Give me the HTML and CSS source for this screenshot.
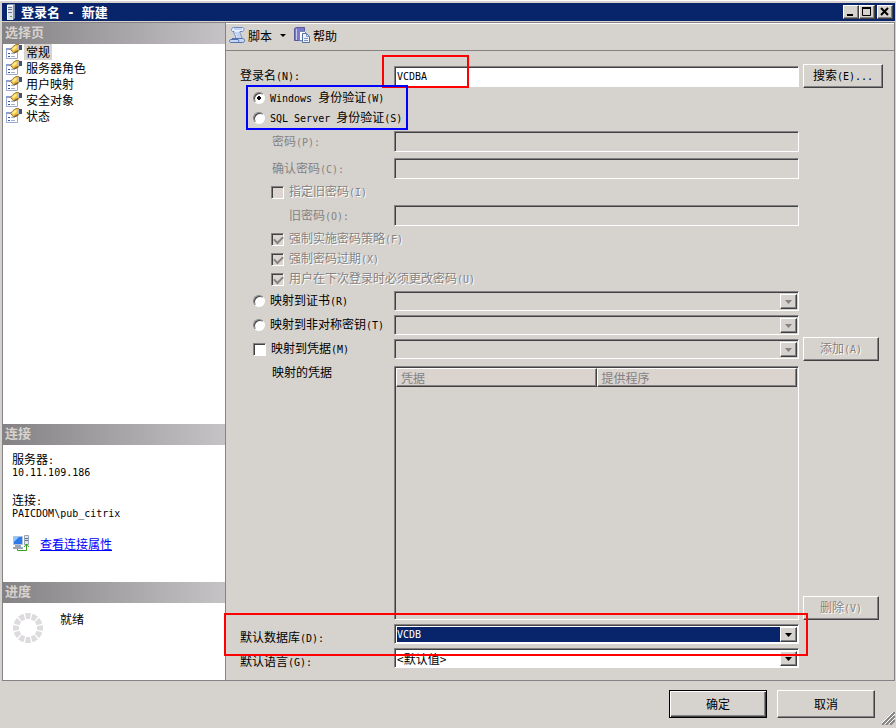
FILE: index.html
```
<!DOCTYPE html>
<html lang="zh-CN">
<head>
    <meta charset="UTF-8">
    <meta name="viewport" content="width=device-width, initial-scale=1.0">
    <title>登录名 - 新建</title>
    <link rel="stylesheet" href="styles.css">
</head>
<body>

<svg class="defs" width="0" height="0">
    <symbol id="page-icon" viewBox="0 0 16 16">
        <path d="M0.500 4.500h11v10h-11z" fill="#fff" stroke="#9caad0"/>
        <path d="M0 4h6v2H0z" fill="#8c9ed6"/>
        <path d="M2 9h2v1H2zM2 12h2v1H2z" fill="#3159c6"/>
        <path d="M5 9h4v1H5zM5 12h4v1H5z" fill="#a5aed0"/>
        <path d="M4.500 5.500L7 2.500l3-2h3v6l-3 2H7L6 7z" fill="#efc34a" stroke="#a57c29"/>
        <path d="M6 5l3-3 2 1-3 3z" fill="#ffeb94"/>
        <path d="M8 8l4-2v1l-3 2z" fill="#6b5529"/>
        <path d="M13 1h3v5h-3z" fill="#4a5563"/>
        <path d="M12 1h1v5h-1z" fill="#b5bac6"/>
    </symbol>
</svg>

<div class="window">
    <header class="title-bar">
        <svg width="10" height="16" viewBox="0 0 10 16">
            <path d="M1 1l1-1h7v14l-2 2H1z" fill="#8494b5"/>
            <path d="M1 1h6v15H1z" fill="#dee3ea"/>
            <path d="M2 3h4v1H2zM2 5h4v1H2zM2 8h4v1H2z" fill="#6b7d9c"/>
            <path d="M1 1h1v14H1zM2 1h5v1H2z" fill="#fff"/>
            <path d="M4 12h2v1H4z" fill="#39b54a"/>
        </svg>
        <h1>登录名<span class="dash"> - </span>新建</h1>
        <button class="win-button" aria-label="最小化"><svg width="12" height="10"><path d="M2 8h6" stroke="#000" stroke-width="2"/></svg></button>
        <button class="win-button" aria-label="最大化"><svg width="12" height="10"><path d="M1.500 1v7.500h8V1" fill="none" stroke="#000"/><path d="M1 1h9" stroke="#000" stroke-width="2"/></svg></button>
        <button class="win-button close" aria-label="关闭"><svg width="12" height="10"><path d="M2 1l7 7M9 1L2 8" stroke="#000" stroke-width="2"/></svg></button>
    </header>

    <div class="frame">
        <aside class="sidebar">
            <h2>选择页</h2>
            <ul class="pages">
                <li><svg width="16" height="16"><use href="#page-icon"/></svg><a href="#" class="current">常规</a></li>
                <li><svg width="16" height="16"><use href="#page-icon"/></svg><a href="#">服务器角色</a></li>
                <li><svg width="16" height="16"><use href="#page-icon"/></svg><a href="#">用户映射</a></li>
                <li><svg width="16" height="16"><use href="#page-icon"/></svg><a href="#">安全对象</a></li>
                <li><svg width="16" height="16"><use href="#page-icon"/></svg><a href="#">状态</a></li>
            </ul>

            <h2>连接</h2>
            <div class="connection">
                <dl>
                    <dt>服务器<span class="en">:</span></dt>
                    <dd class="en">10.11.109.186</dd>
                    <dt>连接<span class="en">:</span></dt>
                    <dd class="en">PAICDOM\pub_citrix</dd>
                </dl>
                <div class="properties">
                    <svg width="18" height="17" viewBox="0 0 18 17">
                        <path d="M1.500 1.500h9v8h-9z" fill="#2c7be8" stroke="#b3c3dc"/>
                        <path d="M2 2h5L2 7z" fill="#8cc4ff"/>
                        <path d="M3 11h6M1 13h10" stroke="#9aa6b8" stroke-width="2"/>
                        <path d="M12.500 0.500h4v9h-4z" fill="#e4e7ec" stroke="#98a2b0"/>
                        <path d="M13 3h3v1h-3zM13 5h3v1h-3z" fill="#5c6f8e"/>
                        <path d="M5.500 14v1.500h9V9M12 12l2.500-3 2.500 3" fill="none" stroke="#37a01e"/>
                    </svg>
                    <a href="#">查看连接属性</a>
                </div>
            </div>

            <h2>进度</h2>
            <div class="progress">
                <svg width="30" height="30" viewBox="0 0 30 30">
                    <circle cx="15" cy="15" r="12" fill="none" stroke="#dedbde" stroke-width="6" pathLength="120" stroke-dasharray="8 2" stroke-dashoffset="4"/>
                </svg>
                <span>就绪</span>
            </div>
        </aside>

        <main class="content">
            <div class="toolbar">
                <button>
                    <svg width="17" height="17" viewBox="0 0 17 17">
                        <path d="M3.500 4.500C2 4 2 1 4.500 0.500h9c2 0 2 3 0 4H11c-1 2 2 4 2 7H7c0-3-3-5-2-7z" fill="#e7efff" stroke="#6b86bd"/>
                        <path d="M5 2h8M6 6h4M7 8h4M8 10h4" stroke="#9cb6e7"/>
                        <path d="M3 11.500h10.500c2.500 0 3 4 0 4H2c-2 0-2-3 0-3h7c1 0 1 2 0 3" fill="#c6d7f7" stroke="#5271ad"/>
                    </svg>
                    脚本
                    <svg class="drop" width="7" height="4"><path d="M0 0h6L3 3z"/></svg>
                </button>
                <button>
                    <svg width="17" height="17" viewBox="0 0 17 17">
                        <path d="M0.500 1.500l2-1h8v13h-10z" fill="#7b79c6" stroke="#5a599c"/>
                        <path d="M2 2h1v11H2z" fill="#c6c7ef"/>
                        <path d="M5.500 4.500h5l2 2v7h-7z" fill="#fff" stroke="#6b86b5"/>
                        <path d="M8.500 6.500h4l3 3v6h-7z" fill="#eff3ff" stroke="#52719c"/>
                        <path d="M12.500 6.500v3h3M10 11.500h4M10 13.500h4" fill="none" stroke="#7b95c9"/>
                    </svg>
                    帮助
                </button>
            </div>

            <form class="form">
                <div class="row">
                    <label for="login">登录名<span class="en">(N):</span></label>
                    <div class="control">
                        <input class="text" type="text" id="login" value="VCDBA">
                        <i class="mark mark-login"></i>
                    </div>
                    <button type="button" class="button search">搜索<span class="en">(E)...</span></button>
                </div>

                <div class="auth">
                    <div class="option">
                        <input type="radio" name="auth" id="windows" checked>
                        <label for="windows"><span class="en">Windows </span>身份验证<span class="en">(W)</span></label>
                    </div>
                    <div class="option">
                        <input type="radio" name="auth" id="sql">
                        <label for="sql"><span class="en">SQL Server </span>身份验证<span class="en">(S)</span></label>
                    </div>
                    <i class="mark mark-auth"></i>
                </div>

                <div class="row field off">
                    <label class="indent" for="password">密码<span class="en">(P):</span></label>
                    <input class="text" type="password" id="password" disabled>
                </div>
                <div class="row field off">
                    <label class="indent" for="confirm">确认密码<span class="en">(C):</span></label>
                    <input class="text" type="password" id="confirm" disabled>
                </div>
                <div class="option nested off">
                    <input type="checkbox" id="use-old" disabled>
                    <label for="use-old">指定旧密码<span class="en">(I)</span></label>
                </div>
                <div class="row field off">
                    <label class="indent-more" for="old">旧密码<span class="en">(O):</span></label>
                    <input class="text" type="password" id="old" disabled>
                </div>
                <div class="option nested off">
                    <input type="checkbox" id="policy" checked disabled>
                    <label for="policy">强制实施密码策略<span class="en">(F)</span></label>
                </div>
                <div class="option nested off">
                    <input type="checkbox" id="expire" checked disabled>
                    <label for="expire">强制密码过期<span class="en">(X)</span></label>
                </div>
                <div class="option nested off">
                    <input type="checkbox" id="must-change" checked disabled>
                    <label for="must-change">用户在下次登录时必须更改密码<span class="en">(U)</span></label>
                </div>

                <div class="row">
                    <div class="option">
                        <input type="radio" name="auth" id="cert">
                        <label for="cert">映射到证书<span class="en">(R)</span></label>
                    </div>
                    <div class="combo">
                        <select aria-label="证书" disabled></select>
                        <span class="arrow"><svg width="7" height="4"><path d="M0 0h7L3.500 4z"/></svg></span>
                    </div>
                </div>
                <div class="row">
                    <div class="option">
                        <input type="radio" name="auth" id="key">
                        <label for="key">映射到非对称密钥<span class="en">(T)</span></label>
                    </div>
                    <div class="combo">
                        <select aria-label="非对称密钥" disabled></select>
                        <span class="arrow"><svg width="7" height="4"><path d="M0 0h7L3.500 4z"/></svg></span>
                    </div>
                </div>
                <div class="row">
                    <div class="option">
                        <input type="checkbox" id="credential">
                        <label for="credential">映射到凭据<span class="en">(M)</span></label>
                    </div>
                    <div class="combo">
                        <select aria-label="凭据" disabled></select>
                        <span class="arrow"><svg width="7" height="4"><path d="M0 0h7L3.500 4z"/></svg></span>
                    </div>
                    <button type="button" class="button" disabled>添加<span class="en">(A)</span></button>
                </div>

                <div class="row list-row">
                    <span class="indent" id="mapped">映射的凭据</span>
                    <div class="list">
                        <table aria-labelledby="mapped">
                            <thead>
                                <tr><th>凭据</th><th>提供程序</th></tr>
                            </thead>
                            <tbody></tbody>
                        </table>
                    </div>
                    <button type="button" class="button" disabled>删除<span class="en">(V)</span></button>
                </div>

                <div class="defaults">
                    <div class="row">
                        <label for="database">默认数据库<span class="en">(D):</span></label>
                        <div class="combo">
                            <select id="database" class="selected"><option>VCDB</option></select>
                            <span class="arrow"><svg width="7" height="4"><path d="M0 0h7L3.500 4z"/></svg></span>
                        </div>
                    </div>
                    <div class="row">
                        <label for="language">默认语言<span class="en">(G):</span></label>
                        <div class="combo">
                            <select id="language"><option>&lt;默认值&gt;</option></select>
                            <span class="arrow"><svg width="7" height="4"><path d="M0 0h7L3.500 4z"/></svg></span>
                        </div>
                    </div>
                    <i class="mark mark-database"></i>
                </div>
            </form>
        </main>
    </div>

    <footer>
        <button class="button default">确定</button>
        <button class="button">取消</button>
        <svg class="grip" width="13" height="13" viewBox="0 0 13 13">
            <path d="M0 13L13 0M4 13l9-9M8 13l5-5" stroke="#848284" stroke-width="2"/>
            <path d="M-1 12L12-1M3 12l10-10M7 12l6-6" stroke="#fff"/>
        </svg>
    </footer>
</div>

</body>
</html>
```
FILE: styles.css
```
* {
    box-sizing: border-box;
}

body {
    margin: 0;
    background-color: #d6d3ce;
    color: #000;
    font-family: "Noto Sans CJK SC", sans-serif;
    font-size: 12px;
    line-height: 12px;
}

button, input, select {
    font: inherit;
    color: inherit;
    margin: 0;
    padding: 0;
}

.defs {
    position: absolute;
}

/* half-width text, 6px for each letter */
.en {
    font-family: "DejaVu Sans Mono", monospace;
    font-size: 10px;
    white-space: pre;
}

.window {
    display: flex;
    flex-direction: column;
    min-height: 100vh;
    padding: 2px 1px 0 2px;
    border-top: 1px solid #fff;
}

/* title bar */
.title-bar {
    display: flex;
    align-items: center;
    height: 18px;
    padding: 0 2px 0 4px;
    background-color: #08246b;
    color: #fff;
}

.title-bar h1 {
    flex: 1;
    margin: 0 0 0 5px;
    font-size: 13px;
    font-weight: bold;
}

.dash {
    font-family: "DejaVu Sans Mono", monospace;
    font-size: 12px;
    white-space: pre;
}

.win-button {
    display: flex;
    width: 16px;
    height: 14px;
    padding: 1px;
    background-color: #d6d3ce;
    border: 1px solid;
    border-color: #fff #424142 #424142 #fff;
    box-shadow: inset -1px -1px #848284;
}

.win-button.close {
    margin-left: 2px;
}

.frame {
    flex: 1;
    display: flex;
    margin-top: 1px;
    border: 1px solid #848284;
    box-shadow: inset 0 1px #fff;
}

/* sidebar */
.sidebar {
    display: flex;
    flex-direction: column;
    width: 223px;
    background-color: #fff;
    border-right: 1px solid #848284;
}

.sidebar h2 {
    margin: 0;
    padding: 0 2px;
    font-size: 13px;
    line-height: 18px;
    height: 21px;
    color: #d6d3ce;
    background: linear-gradient(to right, #848284, #c6c3c6);
}

.pages {
    flex: 1;
    margin: 0;
    padding: 0 3px;
    list-style: none;
}

.pages li {
    display: flex;
    gap: 2px;
    height: 16px;
}

.pages a {
    padding: 0 2px;
    line-height: 16px;
    color: #000;
    text-decoration: none;
}

.pages .current {
    background-color: #d6d3ce;
}

.connection {
    height: 137px;
    padding: 8px 9px;
}

.connection dl {
    margin: 0;
}

.connection dt {
    height: 14px;
}

.connection dd {
    height: 12px;
    margin: 0 0 15px;
}

.properties {
    display: flex;
    align-items: center;
    gap: 10px;
}

.properties a {
    color: #00f;
}

.progress {
    display: flex;
    gap: 17px;
    height: 77px;
    padding: 10px;
}

/* toolbar */
.content {
    flex: 1;
    display: flex;
    flex-direction: column;
}

.toolbar {
    display: flex;
    align-items: center;
    gap: 7px;
    height: 28px;
    padding: 0 3px 2px;
    border-bottom: 1px solid #848284;
}

.toolbar button {
    display: flex;
    align-items: center;
    gap: 2px;
    background: none;
    border: none;
}

.toolbar .drop {
    margin-left: 6px;
}

/* form */
.form {
    flex: 1;
    display: flex;
    flex-direction: column;
    padding: 13px 0 8px 14px;
}

.row {
    display: grid;
    grid-template-columns: 150px 1fr 91px;
    column-gap: 4px;
    align-items: center;
    height: 24px;
}

.row.field {
    height: 27px;
}

.indent {
    padding-left: 32px;
}

.indent-more {
    padding-left: 49px;
}

.option {
    display: flex;
    align-items: center;
    gap: 5px;
    height: 20px;
    padding-left: 13px;
    white-space: nowrap;
}

.option.nested {
    padding-left: 31px;
}

.off {
    color: #848284;
}

.option.off label {
    text-shadow: 1px 1px #fff;
}

.auth, .control, .defaults {
    position: relative;
}

.text {
    display: block;
    width: 100%;
    height: 21px;
    padding: 0 2px;
    background-color: #fff;
    font-family: "DejaVu Sans Mono", monospace;
    font-size: 10px;
    border: 1px solid;
    border-color: #848284 #fff #fff #848284;
    border-radius: 0;
    box-shadow: inset 1px 1px #424142;
}

.text:disabled {
    background-color: #d6d3ce;
}

input[type="radio"], input[type="checkbox"] {
    appearance: none;
    width: 12px;
    height: 12px;
    background-color: #fff;
    border: 1px solid;
    border-color: #848284 #fff #fff #848284;
    box-shadow: inset 1px 1px #424142;
}

input[type="radio"] {
    border-radius: 50%;
}

input[type="radio"]:checked {
    background-image: radial-gradient(circle, #000 2px, transparent 2px);
}

input[type="checkbox"] {
    width: 13px;
    height: 13px;
}

input[type="checkbox"]:disabled {
    background-color: #dcd5d0;
}

input[type="checkbox"]:checked::before {
    content: "";
    display: block;
    width: 7px;
    height: 4px;
    margin: 2px;
    border: solid #848284;
    border-width: 0 0 2px 2px;
    transform: rotate(-45deg);
}

.combo {
    display: flex;
    height: 20px;
    padding: 2px 1px 1px 2px;
    background-color: #fff;
    border: 1px solid;
    border-color: #848284 #fff #fff #848284;
    box-shadow: inset 1px 1px #424142;
}

.combo:has(:disabled) {
    background-color: #d6d3ce;
}

.combo select {
    appearance: none;
    flex: 1;
    min-width: 0;
    background: none;
    border: none;
    border-radius: 0;
    outline: none;
    line-height: 12px;
}

.combo .selected {
    background-color: #08246b;
    color: #fff;
    font-family: "DejaVu Sans Mono", monospace;
    font-size: 10px;
}

.arrow {
    display: flex;
    align-items: center;
    justify-content: center;
    width: 17px;
    background-color: #d6d3ce;
    border: 1px solid;
    border-color: #fff #424142 #424142 #fff;
    box-shadow: inset -1px -1px #848284;
}

:disabled + .arrow {
    fill: #848284;
}

.button {
    width: 76px;
    height: 24px;
    background-color: #d6d3ce;
    border: 1px solid;
    border-color: #fff #424142 #424142 #fff;
    border-radius: 0;
    box-shadow: inset -1px -1px #848284;
    white-space: nowrap;
}

.button:disabled {
    color: #848284;
    text-shadow: 1px 1px #fff;
}

.button.search {
    width: 80px;
}

/* mapped credentials */
.row.list-row {
    flex: 1;
    height: auto;
    min-height: 120px;
    padding: 5px 0 4px;
    align-items: stretch;
}

.list-row .button {
    align-self: end;
}

.list {
    padding: 1px;
    background-color: #d6d3ce;
    border: 1px solid;
    border-color: #848284 #fff #fff #848284;
    box-shadow: inset 1px 1px #424142;
}

.list table {
    width: 100%;
    table-layout: fixed;
    border-collapse: separate;
    border-spacing: 0;
}

.list th {
    height: 19px;
    padding: 0 4px;
    text-align: left;
    font-weight: normal;
    color: #848284;
    background-color: #dad3ce;
    border: 1px solid;
    border-color: #fff #424142 #424142 #fff;
    box-shadow: inset -1px -1px #848284;
}

/* default database and language */
.defaults .row {
    align-items: start;
}

.defaults label {
    padding-top: 7px;
}

/* highlight boxes over the form */
.mark {
    position: absolute;
    border: 2px solid #f00;
    pointer-events: none;
}

.mark-login {
    left: -12px;
    top: -11px;
    width: 87px;
    height: 33px;
}

.mark-auth {
    left: 6px;
    top: -3px;
    width: 162px;
    height: 45px;
    border-color: #00f;
}

.mark-database {
    left: -16px;
    right: 86px;
    top: -11px;
    height: 43px;
}

/* bottom buttons */
footer {
    position: relative;
    display: flex;
    justify-content: flex-end;
    gap: 10px;
    padding: 9px 20px 10px;
}

footer .button {
    width: 98px;
    height: 28px;
}

footer .default {
    border-color: #000;
    box-shadow: inset 1px 1px #fff, inset -1px -1px #424142, inset -2px -2px #848284;
}

.grip {
    position: absolute;
    right: 0;
    bottom: 3px;
}
```
